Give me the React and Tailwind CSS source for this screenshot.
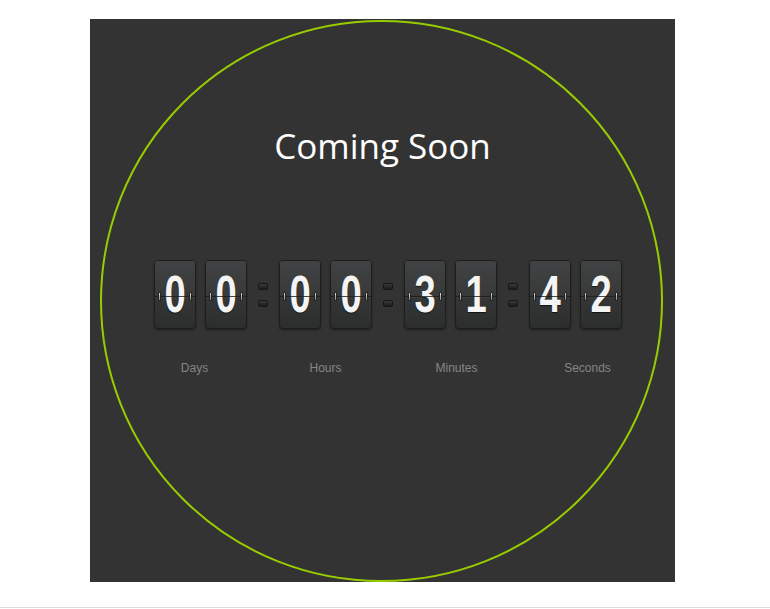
import React from 'react';

const groups = [
  { digits: ['0', '0'], label: 'Days' },
  { digits: ['0', '0'], label: 'Hours' },
  { digits: ['3', '1'], label: 'Minutes' },
  { digits: ['4', '2'], label: 'Seconds' },
];

// one flip-clock card
const Card = ({ digit }) => (
  <div className="relative w-[42px] h-[69px] rounded-[4px] border border-[#1e1e1e] bg-gradient-to-b from-[#3f4041] to-[#2c2d2d] shadow-[0_1px_2px_rgba(0,0,0,0.5)] overflow-hidden">
    <div className="absolute inset-x-0 top-0 h-[35px] bg-gradient-to-b from-[#414243] to-[#383939]" />
    <div className="absolute inset-x-0 top-[36px] h-px bg-[#3b3c3c]" />
    <div className="absolute inset-0 flex items-center justify-center">
      <span
        className="block scale-x-[0.75] text-[51px] leading-none font-bold text-[#f4f4f4] [text-shadow:0_1px_1px_rgba(0,0,0,0.6)]"
        style={{ fontFamily: '"Liberation Sans", Arial, sans-serif' }}
      >
        {digit}
      </span>
    </div>
    <div className="absolute inset-x-0 top-[35px] h-px bg-[#1b1b1b]/80" />
    <div className="absolute left-[3px] top-[31px] w-[3px] h-[9px] rounded-[1px] bg-gradient-to-b from-[#ddd] to-[#888] border border-[#222]" />
    <div className="absolute right-[3px] top-[31px] w-[3px] h-[9px] rounded-[1px] bg-gradient-to-b from-[#ddd] to-[#888] border border-[#222]" />
  </div>
);

const Colon = () => (
  <div className="w-[32px] h-[69px] flex flex-col items-center justify-center gap-[10px]">
    <div className="w-[10px] h-[7px] rounded-[2px] bg-gradient-to-b from-[#3a3a3a] to-[#1c1c1c] border border-[#161616]" />
    <div className="w-[10px] h-[7px] rounded-[2px] bg-gradient-to-b from-[#3a3a3a] to-[#1c1c1c] border border-[#161616]" />
  </div>
);

export default function App() {
  return (
    <div className="w-full h-[609px] bg-white relative">
      <div className="ml-[90px] pt-[19px]">
        <div className="relative w-[585px] h-[563px] bg-[#333333]">
          {/* ring */}
          <div className="absolute left-[10px] top-[1px] w-[563px] h-[562px] rounded-full border-2 border-[#99cc00]" />

          <div className="relative flex flex-col">
            <h1
              className="mt-[109px] text-center text-[35px] leading-none text-white"
              style={{ fontFamily: '"Open Sans", sans-serif' }}
            >
              Coming Soon
            </h1>

            <div className="mt-[97px] pl-[64px] flex items-center">
              {groups.map((g, i) => (
                <React.Fragment key={g.label}>
                  {i > 0 && <Colon />}
                  <div className="flex gap-[9px]">
                    {g.digits.map((d, j) => (
                      <Card key={j} digit={d} />
                    ))}
                  </div>
                </React.Fragment>
              ))}
            </div>

            <div
              className="mt-[33px] pl-[39px] flex text-[12px] leading-none text-[#858585]"
              style={{ fontFamily: '"Liberation Sans", Arial, sans-serif' }}
            >
              {groups.map((g) => (
                <div key={g.label} className="w-[131px] text-center">
                  {g.label}
                </div>
              ))}
            </div>
          </div>
        </div>
      </div>
      <div className="absolute left-0 right-0 top-[607px] h-px bg-[#dedede]" />
    </div>
  );
}
